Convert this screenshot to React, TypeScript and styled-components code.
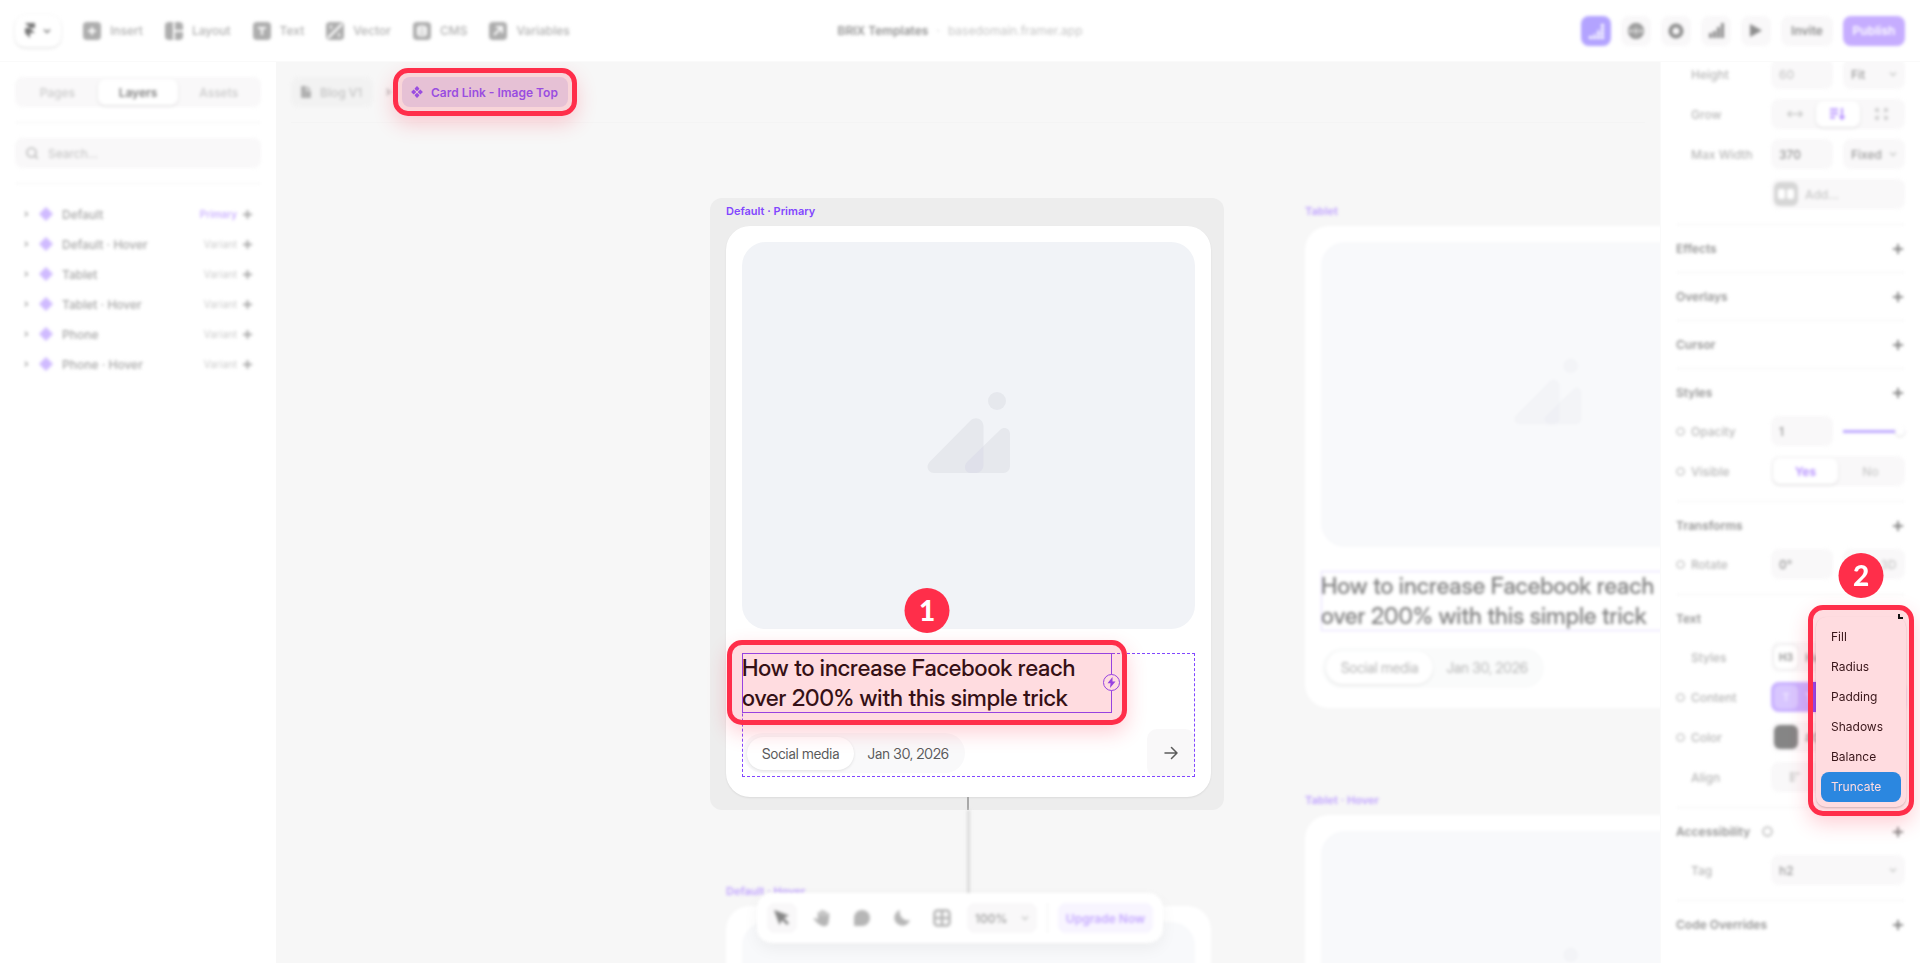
import React from "react";
import styled, { createGlobalStyle, css } from "styled-components";

const c = {
  red: "#ff2e4a",
  tint: "rgba(255, 46, 74, 0.17)",
  violet: "#8247ff",
  canvas: "#f7f7f7",
  field: "#f9f8f9",
  line: "#f4f4f4",
  strong: "#949494",
  text: "#a8a8a8",
  faint: "#cacaca",
};

const Global = createGlobalStyle`
  * { box-sizing: border-box; }
  body { margin: 0; background: #fff; font-family: Inter, "Liberation Sans", sans-serif; font-size: 12px; color: ${c.text}; }
  button, input, select { font: inherit; color: inherit; border: 0; background: none; padding: 0; margin: 0; min-width: 0; }
  h1, h2, h3, p, ul { margin: 0; padding: 0; font: inherit; list-style: none; }
  a { color: inherit; text-decoration: none; }
  svg { display: block; flex: none; }
`;

const displayFont = `"Inter Display", Inter, "Liberation Sans", sans-serif`;

const soft = css`
  filter: blur(1px) blur(1px);
`;

const ring = css`
  content: "";
  position: absolute;
  border: 5px solid ${c.red};
  border-radius: 15px;
  background: ${c.tint};
  background-clip: padding-box;
  box-shadow: 0 8px 20px rgba(255, 46, 74, 0.22);
  pointer-events: none;
`;

const Page = styled.div`
  display: flex;
  flex-direction: column;
  height: 100vh;
  position: relative;
  overflow: hidden;
`;

/* ---------- top bar ---------- */

const TopBar = styled.header`
  display: grid;
  grid-template-columns: 1fr auto 1fr;
  align-items: center;
  height: 62px;
  flex: none;
  padding: 0 15px;
  background: #fff;
  border-bottom: 1px solid #fafafa;
  position: relative;
  z-index: 3;
`;

const Tools = styled.nav`
  ${soft}
  display: flex;
  align-items: center;
  gap: 22px;
`;

const LogoButton = styled.button`
  display: flex;
  align-items: center;
  justify-content: center;
  gap: 8px;
  width: 46px;
  height: 32px;
  border-radius: 10px;
  background: #fff;
  box-shadow: 0 1px 3px rgba(0, 0, 0, 0.14);
  color: #777;
`;

const Tool = styled.button`
  display: flex;
  align-items: center;
  gap: 9px;
  font-weight: 500;
  color: #b0b0b0;
`;

const Project = styled.div`
  ${soft}
  display: flex;
  gap: 8px;
  color: #c4c4c4;
`;

const ProjectName = styled.h1`
  font-weight: 600;
  color: #909090;
`;

const Actions = styled.div`
  ${soft}
  display: flex;
  justify-content: flex-end;
  gap: 10px;
`;

const Action = styled.button<{ $tone?: "analytics" | "publish"; $w?: number }>`
  display: flex;
  align-items: center;
  justify-content: center;
  width: ${(p) => p.$w ?? 30}px;
  height: 30px;
  border-radius: 8px;
  font-weight: 600;
  color: ${(p) => (p.$tone ? "#fff" : "#8e8e8e")};
  background: ${(p) => (p.$tone === "analytics" ? "#b3a3ff" : p.$tone === "publish" ? "#c6adff" : c.field)};
`;

/* ---------- body ---------- */

const Body = styled.div`
  display: flex;
  flex: 1;
  min-height: 0;
`;

const Sidebar = styled.aside`
  width: 276px;
  flex: none;
  padding: 15px;
  background: #fff;
`;

const SidebarInner = styled.div`
  ${soft}
  display: flex;
  flex-direction: column;
  gap: 15px;
`;

const Rule = styled.hr`
  width: 100%;
  height: 1px;
  margin: 0;
  border: 0;
  background: ${c.line};
`;

const Segments = styled.div`
  display: flex;
  height: 30px;
  padding: 2px;
  border-radius: 8px;
  background: ${c.field};
`;

const Segment = styled.button<{ $on?: boolean; $accent?: boolean }>`
  display: flex;
  flex: 1;
  align-items: center;
  justify-content: center;
  border-radius: 7px;
  font-weight: ${(p) => (p.$on ? 600 : 500)};
  color: ${(p) => (p.$on ? (p.$accent ? "#b38dff" : "#808080") : c.faint)};
  background: ${(p) => (p.$on ? "#fff" : "transparent")};
  box-shadow: ${(p) => (p.$on ? "0 1px 3px rgba(0,0,0,.12)" : "none")};
`;

const Search = styled.label`
  display: flex;
  align-items: center;
  gap: 10px;
  height: 30px;
  padding: 0 11px;
  border-radius: 8px;
  background: ${c.field};
  color: #bbb;
`;

const SearchInput = styled.input`
  flex: 1;
  outline: none;
  &::placeholder { color: #c0c0c0; }
`;

const LayerRow = styled.li`
  display: flex;
  align-items: center;
  height: 30px;
  padding: 0 9px 0 8px;
  color: #a6a6a6;
  font-weight: 500;
`;

const LayerName = styled.span`
  flex: 1;
  margin-left: 5px;
`;

const LayerKind = styled.span<{ $primary: boolean }>`
  margin-right: 6px;
  font-size: 10px;
  font-weight: ${(p) => (p.$primary ? 500 : 400)};
  color: ${(p) => (p.$primary ? "#c4a7ff" : "#cacaca")};
`;

/* ---------- canvas ---------- */

const Canvas = styled.main`
  flex: 1;
  min-width: 0;
  overflow: hidden;
  background: ${c.canvas};
`;

const Crumbs = styled.nav`
  display: flex;
  align-items: center;
  height: 61px;
  margin: 0 15px;
  border-bottom: 1px solid #f4f4f4;
`;

const Crumb = styled.a`
  ${soft}
  display: flex;
  align-items: center;
  gap: 9px;
  width: 82px;
  height: 30px;
  padding-left: 10px;
  border-radius: 8px;
  background: #f2f2f2;
  font-weight: 500;
  color: #c4c4c4;
`;

const CrumbArrow = styled.span`
  ${soft}
  display: flex;
  justify-content: center;
  width: 29px;
  color: #bbb;
`;

const CurrentCrumb = styled.a`
  display: flex;
  align-items: center;
  gap: 8px;
  height: 30px;
  padding: 0 10px 0 9px;
  border-radius: 8px;
  background: #e1dff2;
  font-weight: 600;
  color: #8655ff;
  position: relative;
  &::after {
    ${ring}
    inset: -9px;
  }
`;

const Board = styled.div`
  display: flex;
  align-items: flex-start;
  gap: 81px;
  padding: 75px 0 0 calc(50% - 258px);
`;

const Column = styled.div`
  flex: none;
  width: 514px;
  padding-top: 5px;
`;

const MainColumn = styled(Column)`
  padding-top: 0;
`;

const Selected = styled.section`
  position: relative;
  padding: 5px 13px 13px 16px;
  border-radius: 12px;
  background: #ededed;
`;

const Frame = styled.section<{ $gap?: number; $indent?: number }>`
  ${soft}
  margin-top: ${(p) => p.$gap ?? 0}px;
  padding-left: ${(p) => p.$indent ?? 0}px;
`;

const FrameLabel = styled.p<{ $soft?: boolean }>`
  margin-bottom: 7px;
  font-size: 11px;
  line-height: 16px;
  font-weight: 600;
  color: ${(p) => (p.$soft ? "#bfa1ff" : c.violet)};
`;

const Card = styled.article<{ $soft?: boolean }>`
  width: 485px;
  padding: 16px 16px 20px;
  border-radius: 24px;
  background: #fff;
  box-shadow: ${(p) => (p.$soft ? "none" : "0 1px 2px rgba(0,0,0,.08)")};
`;

const Thumb = styled.div<{ $h: number; $soft?: boolean }>`
  display: flex;
  align-items: center;
  justify-content: center;
  height: ${(p) => p.$h}px;
  margin-bottom: 24px;
  padding-bottom: 8px;
  border-radius: 24px;
  background: ${(p) => (p.$soft ? "#f8f9fb" : "#f1f3f7")};
`;

const CardBody = styled.div<{ $dashed?: boolean }>`
  display: flex;
  flex-direction: column;
  gap: 16px;
  position: relative;
  ${(p) => p.$dashed && css`outline: 1px dashed ${c.violet}; outline-offset: -1px;`}
`;

const TitleBox = styled.div<{ $soft?: boolean }>`
  position: relative;
  width: ${(p) => (p.$soft ? "100%" : "370px")};
  height: 60px;
  outline: 1px solid ${(p) => (p.$soft ? "#e4dcff" : c.violet)};
  outline-offset: -1px;
  ${(p) => !p.$soft && css`
    &::after {
      ${ring}
      inset: -13px -15px -12px;
    }
  `}
`;

const Title = styled.h2<{ $soft?: boolean }>`
  font-family: ${displayFont};
  font-size: 23px;
  line-height: 30px;
  font-weight: 500;
  white-space: nowrap;
  color: ${(p) => (p.$soft ? "#808080" : "#0b0b0d")};
`;

const Trigger = styled.span`
  position: absolute;
  right: -8px;
  top: 21px;
  display: flex;
  align-items: center;
  justify-content: center;
  width: 17px;
  height: 17px;
  border: 1px solid ${c.violet};
  border-radius: 50%;
  background: #fff;
  color: ${c.violet};
`;

const MetaRow = styled.div<{ $h: number }>`
  display: flex;
  align-items: center;
  justify-content: space-between;
  height: ${(p) => p.$h}px;
`;

const Meta = styled.div<{ $soft?: boolean }>`
  display: flex;
  align-items: center;
  height: 40px;
  margin-left: 1px;
  padding: 0 16px 0 4px;
  gap: 13px;
  border-radius: 20px;
  background: ${(p) => (p.$soft ? "#fafbfb" : "#f9f9fa")};
  font-family: ${displayFont};
  font-size: 14px;
  color: ${(p) => (p.$soft ? "#b4b4b4" : "#5a5a5a")};
`;

const Category = styled.span`
  padding: 0 15px;
  line-height: 33px;
  border-radius: 17px;
  background: #fff;
  box-shadow: 0 1px 3px rgba(0, 0, 0, 0.1);
`;

const Go = styled.button`
  display: flex;
  align-items: center;
  justify-content: center;
  width: 48px;
  height: 48px;
  border-radius: 10px;
  background: #f9f8f9;
  color: #5c5c5c;
`;

const Connector = styled.span`
  ${soft}
  position: absolute;
  left: 257px;
  top: 100%;
  width: 3px;
  height: 96px;
  background: #dadada;
`;

const ConnectorStub = styled.span`
  position: absolute;
  left: 257px;
  bottom: 0;
  width: 2px;
  height: 13px;
  background: #a8a8a8;
`;

const Badge = styled.span<{ $gap: number }>`
  position: absolute;
  left: 50%;
  bottom: calc(100% + ${(p) => p.$gap}px);
  transform: translateX(-50%);
  z-index: 1;
  width: 45px;
  height: 45px;
  border-radius: 50%;
  background: ${c.red};
  color: #fff;
  font-family: Lato, Inter, sans-serif;
  font-weight: 900;
  font-size: 28px;
  line-height: 44px;
  text-align: center;
`;

/* ---------- floating toolbar ---------- */

const Dock = styled.div`
  ${soft}
  position: absolute;
  left: 50%;
  bottom: 20px;
  transform: translateX(-50%);
  z-index: 2;
  display: flex;
  align-items: center;
  gap: 10px;
  height: 50px;
  padding: 0 10px;
  border-radius: 15px;
  background: #fff;
  box-shadow: 0 6px 16px rgba(0, 0, 0, 0.05);
`;

const DockButton = styled.button<{ $on?: boolean }>`
  display: flex;
  align-items: center;
  justify-content: center;
  width: 30px;
  height: 30px;
  border-radius: 8px;
  color: ${(p) => (p.$on ? "#868686" : "#b6b6b6")};
  background: ${(p) => (p.$on ? c.field : "transparent")};
`;

const DockRule = styled.span`
  width: 1px;
  height: 30px;
  background: ${c.line};
`;

const Upgrade = styled.button`
  width: 95px;
  height: 30px;
  border-radius: 8px;
  background: #f8f5ff;
  font-weight: 600;
  color: #c5a9ff;
  white-space: nowrap;
`;

const SelectWrap = styled.span<{ $w?: number }>`
  display: flex;
  align-items: center;
  width: ${(p) => (p.$w ? `${p.$w}px` : "auto")};
  flex: ${(p) => (p.$w ? "none" : "1")};
  min-width: 0;
  height: 30px;
  padding: 0 8px;
  border-radius: 8px;
  background: ${c.field};
  color: ${c.faint};
`;

const NativeSelect = styled.select`
  flex: 1;
  appearance: none;
  outline: none;
  font-weight: 500;
  color: #9c9c9c;
`;

/* ---------- properties panel ---------- */

const Panel = styled.aside`
  width: 260px;
  flex: none;
  padding: 0 15px;
  border-left: 1px solid #fafafa;
  background: #fff;
`;

const Section = styled.section<{ $first?: boolean }>`
  position: relative;
  margin-top: ${(p) => (p.$first ? -3 : 0)}px;
`;

const SectionInner = styled.div<{ $first?: boolean }>`
  ${soft}
  border-top: ${(p) => (p.$first ? 0 : 1)}px solid ${c.line};
`;

const SectionHead = styled.div`
  display: flex;
  align-items: center;
  justify-content: space-between;
  height: 47px;
  padding-right: 2px;
`;

const SectionTitle = styled.h3`
  display: flex;
  align-items: center;
  gap: 12px;
  font-weight: 600;
  color: ${c.strong};
`;

const PlusButton = styled.button`
  color: #828282;
`;

const Rows = styled.div`
  display: flex;
  flex-direction: column;
  gap: 10px;
  padding-bottom: 15px;
`;

const Row = styled.div`
  display: grid;
  grid-template-columns: 95px 1fr;
  align-items: center;
  height: 30px;
`;

const RowLabel = styled.span`
  display: grid;
  grid-template-columns: 15px 1fr;
  align-items: center;
  white-space: nowrap;
  font-weight: 500;
  color: #b6b6b6;
`;

const Controls = styled.div`
  display: flex;
  align-items: center;
  gap: 10px;
`;

const Field = styled.input`
  width: 62px;
  height: 30px;
  padding: 0 8px;
  border-radius: 8px;
  outline: none;
  background: ${c.field};
  font-weight: 500;
  color: #969696;
  &::placeholder { color: ${c.faint}; }
`;

const Slider = styled.input`
  width: 62px;
  height: 10px;
  appearance: none;
  background: linear-gradient(#bda8ff, #bda8ff) center / 100% 3px no-repeat;
  &::-webkit-slider-thumb {
    appearance: none;
    width: 10px;
    height: 10px;
    border-radius: 50%;
    background: #fff;
    box-shadow: 0 1px 2px rgba(0, 0, 0, 0.15);
  }
`;

const Token = styled.button<{ $accent?: boolean; $text?: string }>`
  display: flex;
  flex: 1;
  align-items: center;
  gap: 7px;
  height: 30px;
  padding: 0 3px;
  border-radius: 8px;
  background: ${(p) => (p.$accent ? "#c8b0ff" : c.field)};
  color: ${(p) => (p.$accent ? "#efe6ff" : p.$text ?? "#969696")};
  font-weight: 500;
`;

const Chip = styled.span<{ $bg: string; $outline?: boolean }>`
  display: flex;
  align-items: center;
  justify-content: center;
  width: 24px;
  height: 24px;
  border-radius: 6px;
  background: ${(p) => p.$bg};
  font-size: 10px;
  font-weight: 700;
  box-shadow: ${(p) => (p.$outline ? "0 0 2px rgba(0,0,0,.2)" : "none")};
`;

const Popover = styled.div`
  position: absolute;
  top: 11px;
  right: -9px;
  z-index: 2;
  width: 106px;
  padding: 12px 8px 9px;
  &::after {
    ${ring}
    inset: 0;
  }
`;

const Menu = styled.ul`
  position: relative;
  padding: 5px;
  border-radius: 10px;
  background: #fff;
  box-shadow: 0 1px 2px rgba(0, 0, 0, 0.2), 0 -4px 0 #fff;
`;

const MenuItem = styled.button<{ $on?: boolean }>`
  display: block;
  width: 80px;
  height: 30px;
  padding: 0 0 1px 10px;
  border-radius: 8px;
  text-align: left;
  color: ${(p) => (p.$on ? "#fff" : "#111")};
  background: ${(p) => (p.$on ? "#0099ff" : "transparent")};
`;

const HiddenPlus = styled.span`
  position: absolute;
  right: 11px;
  top: 9px;
  z-index: 1;
  width: 5px;
  height: 5px;
  border: solid #111;
  border-width: 0 0 2px 2px;
`;

const TokenEdge = styled.span`
  position: absolute;
  left: 5px;
  top: 77px;
  width: 3px;
  height: 30px;
  background: ${c.violet};
`;

/* ---------- icons ---------- */

const Chevron = () => (
  <svg width="8" height="8" viewBox="0 0 8 8" fill="none" stroke="currentColor" strokeWidth="1.5"><path d="M1 2.5 4 5.5 7 2.5" /></svg>
);
const Plus = ({ size = 9 }: { size?: number }) => (
  <svg width={size} height={size} viewBox="0 0 10 10" fill="none" stroke="currentColor" strokeWidth="2"><path d="M5 0v10M0 5h10" /></svg>
);
const Caret = ({ size = 6 }: { size?: number }) => (
  <svg width={size} height={size} viewBox="0 0 6 6" fill="none" stroke="currentColor" strokeWidth="1.4"><path d="M2 .8 4.4 3 2 5.2" /></svg>
);
const Diamond = ({ size = 12 }: { size?: number }) => (
  <svg width={size} height={size} viewBox="0 0 12 12" fill="currentColor">
    {[[6, 2.7], [2.7, 6], [9.3, 6], [6, 9.3]].map(([x, y]) => (
      <rect key={`${x}-${y}`} x={x - 1.9} y={y - 1.9} width="3.8" height="3.8" rx=".8" transform={`rotate(45 ${x} ${y})`} />
    ))}
  </svg>
);
const toolMarks: Record<string, React.ReactNode> = {
  Insert: <path d="M9 5v8M5 9h8" />,
  Layout: <path d="M9 0v18M9 9h9" />,
  Text: <path d="M5 6h8M9 6v7" />,
  Vector: <><path d="M2 16 16 2" strokeWidth="2.4" /><path d="M4 5h2M12 13h2" strokeWidth="3" /></>,
  CMS: <><ellipse cx="9" cy="6" rx="4" ry="1.6" /><path d="M5 6v6c0 2 8 2 8 0V6M5 9c0 2 8 2 8 0" /></>,
  Variables: <path d="M5 13 12.500 5.500M7 5h6v6" />,
};
const ToolIcon = ({ name }: { name: string }) => (
  <svg width="18" height="18" viewBox="0 0 18 18">
    <rect width="18" height="18" rx="4" fill="#adadad" />
    <g fill="none" stroke="#fff" strokeWidth="2">{toolMarks[name]}</g>
  </svg>
);
const Placeholder = ({ size, soft: pale }: { size: number; soft?: boolean }) => (
  <svg width={size} height={size} viewBox="0 0 84 84" fill={pale ? "#f3f4f7" : "#e6e8ed"}>
    <circle cx="70" cy="11" r="9" />
    <path d="M43.500 30.500 2.500 72C-1.500 76.500 1 83 7 83h42a7.500 7.500 0 0 0 7.500-7.500V36c0-7-8-10.500-13-5.500Z" />
    <path d="M73 40 40 72c-4 4.500-2 11 4 11h32.500a6.500 6.500 0 0 0 6.500-6.500V44c0-5.500-6-8-10-4Z" />
    <path d="M56.500 56 40 72c-4 4.500-2 11 4 11h5a7.500 7.500 0 0 0 7.500-7.500Z" fill={pale ? "#eff0f5" : "#dfe0ea"} />
  </svg>
);
const Ring = ({ size = 9 }: { size?: number }) => (
  <svg width={size} height={size} viewBox="0 0 10 10" fill="none" stroke="#c0c0c0" strokeWidth="1.5"><circle cx="5" cy="5" r="4" /></svg>
);

/* ---------- pieces ---------- */

const Select = ({ label, value, w }: { label: string; value: string; w?: number }) => (
  <SelectWrap $w={w}>
    <NativeSelect aria-label={label} defaultValue={value}><option>{value}</option></NativeSelect>
    <Chevron />
  </SelectWrap>
);

const PropRow = ({ label, dot, children }: { label?: string; dot?: boolean; children: React.ReactNode }) => (
  <Row>
    <RowLabel>{dot ? <Ring /> : <span />}{label}</RowLabel>
    <Controls>{children}</Controls>
  </Row>
);

const PropSection = ({ title, plus = true, info, rows, children }: {
  title: string; plus?: boolean; info?: boolean; rows?: React.ReactNode; children?: React.ReactNode;
}) => (
  <Section>
    <SectionInner>
      <SectionHead>
        <SectionTitle>{title}{info && <Ring size={11} />}</SectionTitle>
        {plus && <PlusButton aria-label={`Add ${title}`}><Plus size={10} /></PlusButton>}
      </SectionHead>
      {rows && <Rows>{rows}</Rows>}
    </SectionInner>
    {children}
  </Section>
);

const Heading = ({ soft: pale }: { soft?: boolean }) => (
  <Title $soft={pale}>How to increase Facebook reach<br />over 200% with this simple trick</Title>
);

const MetaPill = ({ soft: pale }: { soft?: boolean }) => (
  <Meta $soft={pale}><Category>Social media</Category><span>Jan 30, 2026</span></Meta>
);

const SoftCard = ({ height }: { height: number }) => (
  <Card $soft>
    <Thumb $soft $h={height}><Placeholder soft size={68} /></Thumb>
    <CardBody>
      <TitleBox $soft><Heading soft /></TitleBox>
      <MetaRow $h={41}><MetaPill soft /></MetaRow>
    </CardBody>
  </Card>
);

const layers = ["Default", "Default · Hover", "Tablet", "Tablet · Hover", "Phone", "Phone · Hover"];
const menuItems = ["Fill", "Radius", "Padding", "Shadows", "Balance", "Truncate"];

export default function App() {
  return (
    <Page>
      <Global />
      <TopBar>
        <Tools>
          <LogoButton aria-label="Menu">
            <svg width="10" height="15" viewBox="0 0 10 15" fill="currentColor"><path d="M0 0h10v5H5L0 0Zm0 5h5l5 5H5v5l-5-5V5Z" /></svg>
            <Chevron />
          </LogoButton>
          {Object.keys(toolMarks).map((name) => <Tool key={name}><ToolIcon name={name} />{name}</Tool>)}
        </Tools>
        <Project><ProjectName>BRIX Templates</ProjectName><span>·</span><span>basedomain.framer.app</span></Project>
        <Actions>
          <Action $tone="analytics" aria-label="Analytics">
            <svg width="17" height="17" viewBox="0 0 17 17" fill="none" stroke="#fff" strokeWidth="3" strokeDasharray="3 1"><path d="M2.500 17v-4M6.500 17v-5M10.500 17V8M14.500 17V1" /></svg>
          </Action>
          <Action aria-label="Site">
            <svg width="16" height="16" viewBox="0 0 16 16" fill="none" stroke="currentColor" strokeWidth="2"><circle cx="8" cy="8" r="7" fill="#b0b0b0" /><path d="M1 8h14" stroke="#e5e5e5" /><ellipse cx="8" cy="8" rx="3" ry="7" strokeWidth="1" /></svg>
          </Action>
          <Action aria-label="Settings">
            <svg width="16" height="16" viewBox="0 0 16 16" fill="none" stroke="currentColor" strokeWidth="4"><circle cx="8" cy="8" r="5.500" /></svg>
          </Action>
          <Action aria-label="Statistics">
            <svg width="15" height="15" viewBox="0 0 15 15" fill="currentColor"><path d="M0 10h3v5H0zM4 8h3v7H4zM8 4h3v11H8zM12 0h3v15h-3z" /></svg>
          </Action>
          <Action aria-label="Preview">
            <svg width="14" height="15" viewBox="0 0 14 15" fill="currentColor"><path d="M1 1v13l12-6.500z" /></svg>
          </Action>
          <Action $w={52}>Invite</Action>
          <Action $w={62} $tone="publish">Publish</Action>
        </Actions>
      </TopBar>

      <Body>
        <Sidebar>
          <SidebarInner>
            <Segments>
              <Segment>Pages</Segment>
              <Segment $on aria-pressed="true">Layers</Segment>
              <Segment>Assets</Segment>
            </Segments>
            <Rule />
            <Search>
              <svg width="12" height="12" viewBox="0 0 12 12" fill="none" stroke="currentColor" strokeWidth="1.6"><circle cx="5.500" cy="5.500" r="4.500" /><path d="m9 9 3 3" /></svg>
              <SearchInput aria-label="Search layers" placeholder="Search…" />
            </Search>
            <Rule />
            <ul>
              {layers.map((name, i) => (
                <LayerRow key={name}>
                  <Caret />
                  <svg width="28" height="14" viewBox="-10 0 28 14" fill="#d0bbff"><path d="M7 0l7 7-7 7-7-7z" /></svg>
                  <LayerName>{name}</LayerName>
                  <LayerKind $primary={i === 0}>{i === 0 ? "Primary" : "Variant"}</LayerKind>
                  <Plus />
                </LayerRow>
              ))}
            </ul>
          </SidebarInner>
        </Sidebar>

        <Canvas>
          <Crumbs>
            <Crumb href="#blog">
              <svg width="10" height="12" viewBox="0 0 10 12" fill="#b0b0b0"><path d="M1 0h4v5h5v6a1 1 0 0 1-1 1H1a1 1 0 0 1-1-1V1a1 1 0 0 1 1-1Zm5 0 4 4H6z" /></svg>
              Blog V1
            </Crumb>
            <CrumbArrow><Caret size={8} /></CrumbArrow>
            <CurrentCrumb href="#card"><Diamond />Card Link - Image Top</CurrentCrumb>
          </Crumbs>
          <Board>
            <MainColumn>
              <Selected>
                <FrameLabel>Default · Primary</FrameLabel>
                <Card>
                  <Thumb $h={387}><Placeholder size={84} /></Thumb>
                  <CardBody $dashed>
                    <TitleBox>
                      <Heading />
                      <Trigger>
                        <svg width="9" height="11" viewBox="0 0 9 11" fill="currentColor"><path d="M5.500 0 .5 6.200h3L3 11l5.500-6.500h-3z" /></svg>
                      </Trigger>
                      <Badge $gap={20}>1</Badge>
                    </TitleBox>
                    <MetaRow $h={48}>
                      <MetaPill />
                      <Go aria-label="Open article">
                        <svg width="14" height="14" viewBox="0 0 14 14" fill="none" stroke="currentColor" strokeWidth="1.500" strokeLinecap="round" strokeLinejoin="round"><path d="M1 7h12M7.500 1.500 13 7l-5.500 5.500" /></svg>
                      </Go>
                    </MetaRow>
                  </CardBody>
                </Card>
                <ConnectorStub />
                <Connector />
              </Selected>
              <Frame $gap={73} $indent={16}>
                <FrameLabel $soft>Default · Hover</FrameLabel>
                <SoftCard height={387} />
              </Frame>
            </MainColumn>
            <Column>
              <Frame>
                <FrameLabel $soft>Tablet</FrameLabel>
                <SoftCard height={305} />
              </Frame>
              <Frame $gap={84}>
                <FrameLabel $soft>Tablet · Hover</FrameLabel>
                <SoftCard height={305} />
              </Frame>
            </Column>
          </Board>
        </Canvas>

        <Panel>
          <Section $first>
            <SectionInner $first>
              <Rows>
                <PropRow label="Height"><Field aria-label="Height" placeholder="60" /><Select label="Height mode" value="Fit" w={62} /></PropRow>
                <PropRow label="Grow">
                  <SegmentsFill>
                    <Segment aria-label="Auto width"><svg width="16" height="8" viewBox="0 0 16 8" fill="none" stroke="currentColor" strokeWidth="1.6"><path d="M1 4h14M4 1 1 4l3 3M12 1l3 3-3 3" /></svg></Segment>
                    <Segment $on $accent aria-label="Auto height"><svg width="15" height="12" viewBox="0 0 15 12" fill="none" stroke="currentColor" strokeWidth="1.8"><path d="M0 1.500h8M0 5.500h8M0 9.500h5M12 0v10M9.500 8l2.500 3 2.500-3" /></svg></Segment>
                    <Segment aria-label="Fixed size"><svg width="13" height="12" viewBox="0 0 13 12" fill="none" stroke="currentColor" strokeWidth="1.6"><path d="M1 4V1h3M9 1h3v3M12 8v3H9M4 11H1V8M1 1l3 3M12 1 9 4M12 11 9 8M1 11l3-3" /></svg></Segment>
                  </SegmentsFill>
                </PropRow>
                <PropRow label="Max Width"><Field aria-label="Max width" defaultValue="370" /><Select label="Max width mode" value="Fixed" w={62} /></PropRow>
                <PropRow>
                  <Token $text="#c8c8c8">
                    <Chip $bg="#d6d6d6"><svg width="16" height="10" viewBox="0 0 16 10" fill="#fff"><rect width="7" height="10" rx="2" /><rect x="9" width="7" height="10" rx="2" /></svg></Chip>Add…
                  </Token>
                </PropRow>
              </Rows>
            </SectionInner>
          </Section>
          <PropSection title="Effects" />
          <PropSection title="Overlays" />
          <PropSection title="Cursor" />
          <PropSection title="Styles" rows={<>
            <PropRow label="Opacity" dot><Field aria-label="Opacity" defaultValue="1" /><Slider type="range" aria-label="Opacity" min={0} max={1} step={0.1} defaultValue={1} /></PropRow>
            <PropRow label="Visible" dot>
              <SegmentsFill><Segment $on $accent aria-pressed="true">Yes</Segment><Segment>No</Segment></SegmentsFill>
            </PropRow>
          </>} />
          <PropSection title="Transforms" rows={
            <PropRow label="Rotate" dot>
              <Field aria-label="Rotate" defaultValue="0°" />
              <Dimensions><Segment>2D</Segment><Segment>3D</Segment></Dimensions>
            </PropRow>
          } />
          <PropSection title="Text" plus={false} rows={<>
            <PropRow label="Styles"><Token><Chip $bg="#fff" $outline>H3</Chip>Heading</Token></PropRow>
            <PropRow label="Content" dot><Token $accent><Chip $bg="#d8c6ff">T</Chip>Title</Token></PropRow>
            <PropRow label="Color" dot><Token><Chip $bg="#858585" />#0b0b0d</Token></PropRow>
            <PropRow label="Align">
              <SegmentsFill>
                {["Left", "Center", "Right"].map((side) => (
                  <Segment key={side} aria-label={side}><svg width="10" height="10" viewBox="0 0 10 10" fill="none" stroke="currentColor" strokeWidth="1.600"><path d="M1 0v10M1 1.500h9M1 5h5M1 8.500h4" /></svg></Segment>
                ))}
              </SegmentsFill>
            </PropRow>
          </>}>
            <Popover>
              <Badge $gap={7}>2</Badge>
              <TokenEdge />
              <Menu>
                {menuItems.map((item) => <li key={item}><MenuItem $on={item === "Truncate"}>{item}</MenuItem></li>)}
              </Menu>
              <HiddenPlus />
            </Popover>
          </PropSection>
          <PropSection title="Accessibility" info rows={<PropRow label="Tag"><Select label="Tag" value="h2" /></PropRow>} />
          <PropSection title="Code Overrides" />
        </Panel>
      </Body>

      <Dock role="toolbar" aria-label="Canvas tools">
        <DockButton $on aria-label="Select"><svg width="16" height="16" viewBox="0 0 16 16" fill="currentColor"><path d="M0 0l15 5.500-5 2.500 5 5-2 2-5-5-2.500 5z" /></svg></DockButton>
        <DockButton aria-label="Pan"><svg width="18" height="18" viewBox="0 0 18 18" fill="none" stroke="currentColor" strokeWidth="2.400" strokeLinecap="round"><path d="M6 9V4M9 8V2M12 8V3M15 9V5M2 10l4 4" /><path d="M6 8h9v4c0 3-2 4.500-4.500 4.500S6 14 5 12z" fill="currentColor" strokeWidth="1.500" /></svg></DockButton>
        <DockButton aria-label="Comment"><svg width="16" height="16" viewBox="0 0 16 16" fill="currentColor"><path d="M8 0a8 8 0 1 1 0 16H1a1 1 0 0 1-1-1V8a8 8 0 0 1 8-8Z" /></svg></DockButton>
        <DockButton aria-label="Dark mode"><svg width="16" height="16" viewBox="0 0 16 16" fill="currentColor"><path d="M6 0a8 8 0 1 0 10 10A8 8 0 0 1 6 0Z" /></svg></DockButton>
        <DockButton aria-label="Grid"><svg width="18" height="18" viewBox="0 0 18 18" fill="none" stroke="currentColor" strokeWidth="2.500"><rect x="1.500" y="1.500" width="15" height="15" rx="3" /><path d="M9 1v16M1 9h16" /></svg></DockButton>
        <Select label="Zoom" value="100%" w={70} />
        <DockRule />
        <Upgrade>Upgrade Now</Upgrade>
      </Dock>
    </Page>
  );
}

const SegmentsFill = styled(Segments)`
  flex: 1;
`;

const Dimensions = styled(Segments)`
  width: 62px;
`;
